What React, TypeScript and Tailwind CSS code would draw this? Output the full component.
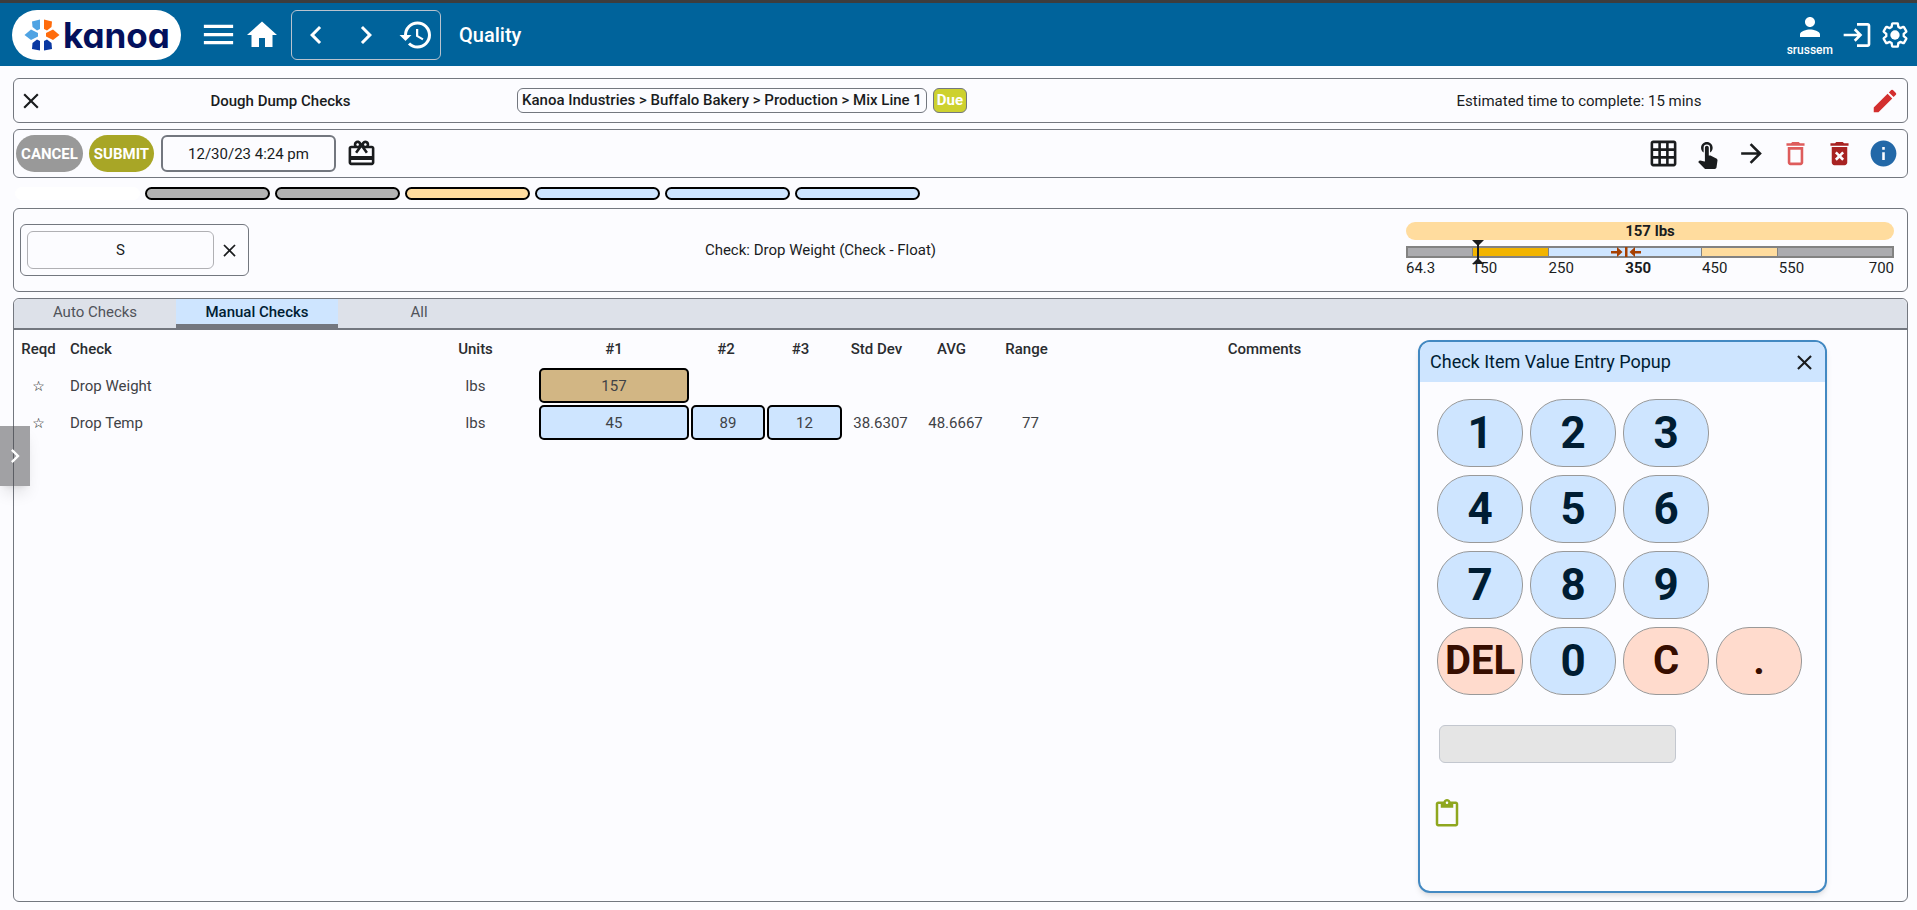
import React from 'react';
import clsx from 'clsx';
import {
  MdArrowForward,
  MdChevronLeft,
  MdChevronRight,
  MdClose,
  MdContentPaste,
  MdDeleteForever,
  MdDeleteOutline,
  MdEdit,
  MdGridOn,
  MdHistory,
  MdHome,
  MdInfo,
  MdLogin,
  MdMenu,
  MdPerson,
  MdRedeem,
  MdTouchApp,
} from 'react-icons/md';

const panel = 'rounded-md border border-[#73777f]';

function Logo() {
  return (
    <a href="#" aria-label="kanoa home" className="flex h-[50px] w-[169px] items-center rounded-full bg-white pl-3">
      <svg viewBox="-18 -17 36 34" className="h-[34px] w-9 shrink-0">
        <g fill="#4fa3e3">
          <polygon points="-10,-13.5 -2,-15.5 -2,-6 -5,-4.5 -9.5,-8" />
          <polygon points="-17.5,0 -11,-5.5 -4,-2 -4,1.5 -11,5" />
        </g>
        <g fill="#ff6b0b">
          <polygon points="10,-13.5 2,-15.5 2,-6 5,-4.5 9.5,-8" />
          <polygon points="17.5,0 11,-5.5 4,-2 4,1.5 11,5" />
        </g>
        <g fill="#0b39a2">
          <polygon points="-10,14 -2,15.5 -2,6 -5,4.5 -9.5,8" />
          <polygon points="10,14 2,15.5 2,6 5,4.5 9.5,8" />
        </g>
      </svg>
      <span className="ml-[3px] text-[35px] leading-9 font-bold text-[#03105c] font-['Inter','Lato',sans-serif] [font-feature-settings:'cv11']">
        kanoa
      </span>
    </a>
  );
}

function GearIcon() {
  return (
    <svg viewBox="0 0 24 24" className="size-7" fill="none" stroke="currentColor" strokeWidth="2" strokeLinejoin="round">
      <path d="M19.43 12.98c.04-.32.07-.64.07-.98 0-.34-.03-.66-.07-.98l2.11-1.65c.19-.15.24-.42.12-.64l-2-3.46c-.09-.16-.26-.25-.44-.25-.06 0-.12.01-.17.03l-2.49 1c-.52-.4-1.08-.73-1.69-.98l-.38-2.65C14.46 2.18 14.25 2 14 2h-4c-.25 0-.46.18-.49.42l-.38 2.65c-.61.25-1.17.59-1.69.98l-2.49-1c-.06-.02-.12-.03-.18-.03-.17 0-.34.09-.43.25l-2 3.46c-.13.22-.07.49.12.64l2.11 1.65c-.04.32-.07.65-.07.98 0 .33.03.66.07.98l-2.11 1.65c-.19.15-.24.42-.12.64l2 3.46c.09.16.26.25.44.25.06 0 .12-.01.17-.03l2.49-1c.52.4 1.08.73 1.69.98l.38 2.65c.03.24.24.42.49.42h4c.25 0 .46-.18.49-.42l.38-2.65c.61-.25 1.17-.59 1.69-.98l2.49 1c.06.02.12.03.18.03.17 0 .34-.09.43-.25l2-3.46c.12-.22.07-.49-.12-.64l-2.11-1.65z" />
      <circle cx="12" cy="12" r="4" fill="currentColor" stroke="none" />
    </svg>
  );
}

function Header() {
  return (
    <header className="flex h-[66px] items-center border-t-3 border-[#3d3d3d] bg-[#00639b] pr-2 pl-3 text-white">
      <Logo />
      <button aria-label="Menu" className="ml-[18px]"><MdMenu size={39} /></button>
      <button aria-label="Home" className="ml-[6px]"><MdHome size={36} /></button>
      <nav className="ml-[11px] flex h-[50px] w-[150px] items-center justify-between rounded-md border border-[#b9c3cf] px-[6px]">
        <button aria-label="Back"><MdChevronLeft size={36} /></button>
        <button aria-label="Forward"><MdChevronRight size={36} /></button>
        <button aria-label="History"><MdHistory size={36} /></button>
      </nav>
      <h1 className="ml-[18px] text-xl font-medium">Quality</h1>
      <div className="ml-auto flex items-center gap-2">
        <button className="flex flex-col items-center text-xs leading-4 font-medium">
          <MdPerson size={30} />
          srussem
        </button>
        <button aria-label="Sign out"><MdLogin size={32} /></button>
        <button aria-label="Settings"><GearIcon /></button>
      </div>
    </header>
  );
}

function TitlePanel() {
  return (
    <section className={clsx(panel, 'flex h-[45px] items-center pr-[7px] pl-1')}>
      <button aria-label="Close check"><MdClose size={26} /></button>
      <h2 className="w-[473px] text-center font-medium">Dough Dump Checks</h2>
      <div className="flex flex-1 items-center gap-[6px]">
        <span className={clsx(panel, 'px-1 leading-[23px] font-medium')}>
          Kanoa Industries &gt; Buffalo Bakery &gt; Production &gt; Mix Line 1
        </span>
        <span className={clsx(panel, 'bg-[#cdd12f] px-[3px] leading-[23px] font-bold text-white')}>Due</span>
      </div>
      <p className="w-[582px] text-center">Estimated time to complete: 15 mins</p>
      <button aria-label="Edit" className="text-[#d32f2f]"><MdEdit size={30} /></button>
    </section>
  );
}

const actions = [
  { label: 'Grid view', Icon: MdGridOn, color: 'text-[#1a1c1e]' },
  { label: 'Touch entry', Icon: MdTouchApp, color: 'text-[#1a1c1e]' },
  { label: 'Next', Icon: MdArrowForward, color: 'text-[#1a1c1e]' },
  { label: 'Delete', Icon: MdDeleteOutline, color: 'text-[#de5c5c]' },
  { label: 'Delete permanently', Icon: MdDeleteForever, color: 'text-[#a82222]' },
  { label: 'Information', Icon: MdInfo, color: 'text-[#2368a8]' },
];

function ActionPanel() {
  return (
    <section className={clsx(panel, 'mt-[6px] flex h-[49px] items-center px-[2px]')}>
      <button className="h-[37px] w-[67px] rounded-full bg-[#999999] font-bold text-white">CANCEL</button>
      <button className="ml-[6px] h-[37px] w-[65px] rounded-full bg-[#a8a626] font-bold text-white">SUBMIT</button>
      <input
        aria-label="Check time"
        defaultValue="12/30/23 4:24 pm"
        className="ml-[7px] h-[37px] w-[175px] rounded-md border-2 border-[#73777f] text-center"
      />
      <button aria-label="Gift" className="ml-[10px]"><MdRedeem size={31} /></button>
      <div className="ml-auto flex">
        {actions.map(({ label, Icon, color }) => (
          <button key={label} aria-label={label} className={clsx('flex w-11 justify-center', color)}>
            <Icon size={31} />
          </button>
        ))}
      </div>
    </section>
  );
}

const steps = [
  'bg-white',
  'border-2 border-black bg-[#b3b3b3]',
  'border-2 border-black bg-[#b3b3b3]',
  'border-2 border-black bg-[#ffdc9e]',
  'border-2 border-black bg-[#cee5ff]',
  'border-2 border-black bg-[#cee5ff]',
  'border-2 border-black bg-[#cee5ff]',
];

function Steps() {
  return (
    <div className="flex gap-[5px] px-[2px] pt-[9px] pb-2">
      {steps.map((style, i) => (
        <span key={i} className={clsx('h-[13px] w-[125px] rounded-full', style)} />
      ))}
    </div>
  );
}

const scale = { min: 64.3, max: 700 };
const bands = [
  { from: 64.3, to: 150, style: 'bg-[#ababaf]' },
  { from: 150, to: 250, style: 'bg-[#f2b400]' },
  { from: 250, to: 450, style: 'bg-[#cee5ff]' },
  { from: 450, to: 550, style: 'bg-[#ffdc9e]' },
  { from: 550, to: 700, style: 'bg-[#ababaf]' },
];
const ticks = [64.3, 150, 250, 350, 450, 550];
const percent = (v: number) => `${((v - scale.min) / (scale.max - scale.min)) * 100}%`;

function Gauge() {
  return (
    <div className="ml-[14px] w-[488px]">
      <div className="rounded-full bg-[#ffdc9e] text-center leading-[18px] font-bold">157 lbs</div>
      <div className="relative mt-[6px]">
        <div className="flex h-3 divide-x divide-[#828282] border-2 border-[#828282]">
          {bands.map((b) => (
            <span key={b.from} className={b.style} style={{ width: percent(b.to - b.from + scale.min) }} />
          ))}
        </div>
        <svg viewBox="0 0 30 10" className="absolute top-px h-[10px] w-[30px] -translate-x-1/2" style={{ left: percent(351) }} fill="#a63f00">
          <path d="M0 4h6V0l5.500 5L6 10V6.500H0V4zM14 0h2.500v10H14zM30 4h-6V0l-5.500 5 5.500 5V6.500h6V4z" />
        </svg>
        <svg viewBox="0 0 12 24" className="absolute -top-[6px] h-6 w-3 -translate-x-1/2" style={{ left: percent(158) }} fill="#1a1c1e">
          <path d="M0 0h12L7 5v14l5 5H0l5-5V5z" />
        </svg>
      </div>
      <div className="relative flex justify-end leading-5">
        {ticks.map((t) => (
          <span key={t} className={clsx('absolute', t === 350 && 'font-bold')} style={{ left: percent(t) }}>
            {t}
          </span>
        ))}
        <span>{scale.max}</span>
      </div>
    </div>
  );
}

function CheckPanel() {
  return (
    <section className={clsx(panel, 'flex h-[84px] items-center pr-[13px] pl-[6px]')}>
      <div className={clsx(panel, 'flex h-[52px] w-[229px] items-center pl-[6px]')}>
        <input
          aria-label="Lot"
          defaultValue="S"
          className="h-[38px] w-[187px] rounded-md border border-[#b0b0b4] text-center"
        />
        <button aria-label="Clear" className="ml-[5px]"><MdClose size={21} /></button>
      </div>
      <p className="flex-1 text-center">Check: Drop Weight (Check - Float)</p>
      <Gauge />
    </section>
  );
}

const tabs = ['Auto Checks', 'Manual Checks', 'All'];
const columns = [
  { name: 'Reqd', style: 'w-[49px]' },
  { name: 'Check', style: 'w-[350px] pl-[7px] text-left' },
  { name: 'Units', style: 'w-[125px]' },
  { name: '#1', style: 'w-[152px]' },
  { name: '#2', style: 'w-[76px] pr-1' },
  { name: '#3', style: 'w-[77px] pr-2' },
  { name: 'Std Dev', style: 'w-[75px] pr-2' },
  { name: 'AVG', style: 'w-[75px] pr-2' },
  { name: 'Range', style: 'w-[75px] pr-2' },
  { name: 'Comments', style: 'w-[393px]' },
];
const rows = [
  { check: 'Drop Weight', units: 'lbs', values: ['157'], style: 'bg-[#d2b684]', stats: ['', '', ''] },
  { check: 'Drop Temp', units: 'lbs', values: ['45', '89', '12'], style: 'bg-[#cee5ff]', stats: ['38.6307', '48.6667', '77'] },
];

function ChecksTable() {
  return (
    <table className="w-[1447px] table-fixed text-center text-[#3f4246]">
      <thead>
        <tr className="h-[37px] text-[#2a2c2f]">
          {columns.map((c) => (
            <th key={c.name} className={clsx('font-medium', c.style)}>{c.name}</th>
          ))}
        </tr>
      </thead>
      <tbody>
        {rows.map((r) => (
          <tr key={r.check} className="h-[37px]">
            <td className="text-sm text-black font-['DejaVu_Sans',sans-serif]">☆</td>
            <td className="pl-[7px] text-left">{r.check}</td>
            <td>{r.units}</td>
            {[0, 1, 2].map((i) => (
              <td key={i} className="px-px">
                {r.values[i] && (
                  <button className={clsx('block h-[35px] w-full rounded-[5px] border-2 border-black', r.style)}>
                    {r.values[i]}
                  </button>
                )}
              </td>
            ))}
            {r.stats.map((s, i) => (
              <td key={i}>{s}</td>
            ))}
            <td />
          </tr>
        ))}
      </tbody>
    </table>
  );
}

const keys = ['1', '2', '3', '4', '5', '6', '7', '8', '9', 'DEL', '0', 'C', '.'];

function Keypad() {
  return (
    <div className="grid grid-cols-[repeat(4,86px)] gap-x-[7px] gap-y-2">
      {keys.map((k) => (
        <button
          key={k}
          className={clsx(
            'flex h-[68px] items-center justify-center rounded-[33px] border border-[#999999] font-bold',
            /\d/.test(k) ? 'bg-[#cee5ff] text-[44px] text-[#001d33]' : 'bg-[#ffdbcd] text-[40px] text-[#370e00]',
            ['4', '7', 'DEL'].includes(k) && 'col-start-1',
          )}
        >
          {k}
        </button>
      ))}
    </div>
  );
}

function EntryPopup() {
  return (
    <div
      role="dialog"
      aria-label="Check Item Value Entry Popup"
      className="absolute top-[41px] right-20 h-[553px] w-[409px] overflow-hidden rounded-xl border-2 border-[#4389c2] bg-[#fcfcff] shadow-md"
    >
      <div className="flex h-10 items-center justify-between bg-[#cee5ff] pr-2 pl-[10px]">
        <h3 className="text-lg text-[#001d33]">Check Item Value Entry Popup</h3>
        <button aria-label="Close popup"><MdClose size={25} /></button>
      </div>
      <div className="px-[17px] pt-[17px]">
        <Keypad />
        <input aria-label="Value" className="mt-[30px] ml-[2px] block h-[38px] w-[237px] rounded-md border border-[#c3c7cf] bg-[#e5e5e5] px-2" />
        <button aria-label="Paste" className="mt-9 -ml-[5px] block text-[#8fa71f]"><MdContentPaste size={30} /></button>
      </div>
    </div>
  );
}

function ChecksPanel() {
  return (
    <section className={clsx(panel, 'relative mt-[6px] flex-1')}>
      <div role="tablist" className="flex h-[31px] rounded-t-md border-b-2 border-[#73777f] bg-[#dde1e9]">
        {tabs.map((t) => (
          <button
            key={t}
            role="tab"
            aria-selected={t === 'Manual Checks'}
            className={clsx(
              'w-[162px] border-b-4',
              t === 'Manual Checks' ? 'border-[#73777f] bg-[#cee5ff] font-medium text-[#001d33]' : 'border-transparent text-[#50535a]',
            )}
          >
            {t}
          </button>
        ))}
      </div>
      <ChecksTable />
      <EntryPopup />
    </section>
  );
}

export default function App() {
  return (
    <div className="relative flex min-h-screen flex-col bg-[#fcfcff] text-[15px] leading-5 text-[#1a1c1e] font-['Roboto','Liberation_Sans',sans-serif]">
      <Header />
      <main className="flex flex-1 flex-col pt-3 pr-[9px] pb-2 pl-[13px]">
        <TitlePanel />
        <ActionPanel />
        <Steps />
        <CheckPanel />
        <ChecksPanel />
      </main>
      <button
        aria-label="Open drawer"
        className="absolute top-[426px] left-0 flex h-[60px] w-[30px] items-center justify-center bg-[#45464a]/50 text-white shadow-lg"
      >
        <MdChevronRight size={28} />
      </button>
    </div>
  );
}
